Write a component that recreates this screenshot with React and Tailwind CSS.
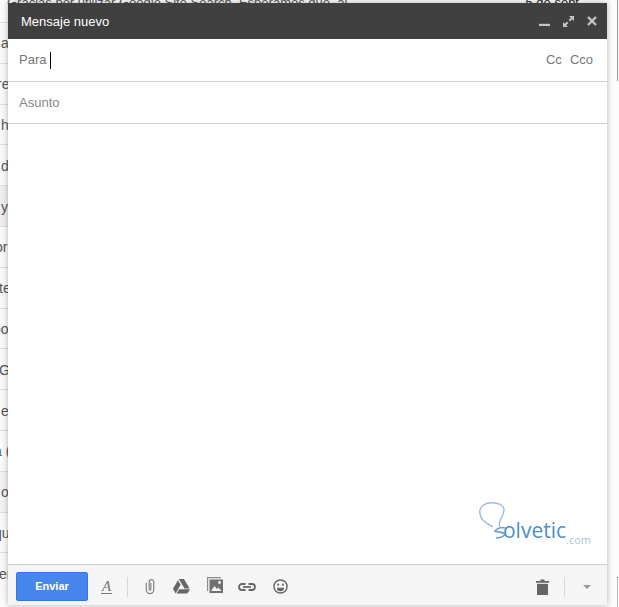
const rows = [
  { text: "a", className: "ml-[1px]", bg: "bg-[#fafafa]" },
  { text: "re", className: "-ml-[3px]", bg: "bg-[#fafafa]" },
  { text: "h", className: "ml-[1px]", bg: "bg-[#fafafa]" },
  { text: "d", className: "ml-[1px]", bg: "bg-[#fafafa]" },
  { text: "y", className: "ml-[1px]", bg: "bg-[#efefef]" },
  { text: "ori", className: "-ml-[5px]", bg: "bg-[#fafafa]" },
  { text: "te", className: "-ml-[1px]", bg: "bg-[#fafafa]" },
  { text: "oo", className: "-ml-[7px]", bg: "bg-[#fafafa]" },
  { text: "Go", className: "-ml-[1px]", bg: "bg-[#fafafa]" },
  { text: "e", className: "ml-[1px]", bg: "bg-[#fafafa]" },
  { text: "a (", className: "-ml-[6px]", bg: "bg-[#fafafa]" },
  { text: "o", className: "ml-[1px]", bg: "bg-[#f3f3f3]" },
  { text: "qu", className: "-ml-[6px]", bg: "bg-[#fafafa]" },
  { text: "er", className: "-ml-[1px]", bg: "bg-[#fafafa]" },
];

function Clip() {
  return (
    <svg width="10" height="17" viewBox="0 0 12 19" fill="none" stroke="#808080" strokeWidth="1.4">
      <path d="M1.5 5v8.5a4.5 4.5 0 0 0 9 0V4a2.75 2.75 0 0 0-5.5 0v9a1 1 0 0 0 2 0V5" />
    </svg>
  );
}

function Drive() {
  return (
    <svg width="17" height="15" viewBox="0 0 17 15" fill="#666">
      <path d="M5.8 0h5.2l5.6 9.6h-5.1z" />
      <path d="M5 1.2 7.6 5.7 2.6 14.4 0 9.8z" />
      <path d="M3.6 14.6 6.2 10.2H17l-2.6 4.4z" />
    </svg>
  );
}

function Photo() {
  return (
    <svg width="16" height="16" viewBox="0 0 16 16">
      <path fill="#8c8c8c" d="M0 0h14v1.2H1.2V14H0z" />
      <path fill="#707070" d="M2.5 2.5H16V16H2.5z" />
      <circle cx="12.5" cy="5.5" r="1.4" fill="#f5f5f5" />
      <path fill="#f5f5f5" d="M4 14l3.5-5 2.5 3 1.5-1.5 3 3.5z" />
    </svg>
  );
}

function LinkIcon() {
  return (
    <svg width="18" height="8" viewBox="0 0 18 8" fill="none" stroke="#666" strokeWidth="1.8">
      <path d="M7.5 1H4a3 3 0 0 0 0 6h3.5" />
      <path d="M10.5 1H14a3 3 0 0 1 0 6h-3.5" />
      <path d="M5 4h8" />
    </svg>
  );
}

function Smile() {
  return (
    <svg width="15" height="15" viewBox="0 0 16 16" fill="none" stroke="#666" strokeWidth="1.5">
      <circle cx="8" cy="8" r="7" />
      <circle cx="5.5" cy="6" r="1.1" fill="#666" stroke="none" />
      <circle cx="10.5" cy="6" r="1.1" fill="#666" stroke="none" />
      <path d="M4.2 9.3h7.6a3.8 3.8 0 0 1-7.6 0z" fill="#666" stroke="none" />
    </svg>
  );
}

function Trash() {
  return (
    <svg width="13" height="16" viewBox="0 0 13 16" fill="#666">
      <path d="M0 2h4.5V.6h4V2H13v1.8H0z" />
      <path d="M1 4.8h11V16H1z" />
    </svg>
  );
}

function Minimize() {
  return (
    <svg width="11" height="11" viewBox="0 0 11 11" fill="#c4c4c4">
      <path d="M0 7.8h11v2.2H0z" />
    </svg>
  );
}

function Expand() {
  return (
    <svg width="11" height="11" viewBox="0 0 11 11" fill="#c4c4c4">
      <path d="M6 0h5v5L9.2 3.2 7 5.4 5.6 4 7.8 1.8z" />
      <path d="M5 11H0V6l1.8 1.8L4 5.6 5.4 7 3.2 9.2z" />
    </svg>
  );
}

function Close() {
  return (
    <svg width="10" height="10" viewBox="0 0 10 10" stroke="#c4c4c4" strokeWidth="2.4">
      <path d="M1 1l8 8M9 1l-8 8" />
    </svg>
  );
}

function Logo() {
  return (
    <div className="flex items-end font-['Open_Sans',sans-serif] leading-none">
      <svg width="28" height="38" viewBox="0 0 28 38" fill="none" className="-mr-[4px] mb-[4px]">
        <path
          d="M14 25C8 21 1 19 .8 10 .6 4 6 1 12 .8 19 .5 25 3 25 8c0 5-3 7-4 11-.5 2-.7 4-.7 6"
          stroke="#9dbde0"
          strokeWidth="1.4"
        />
        <path d="M26 26c-3-1-7 0-10 3 2 1 8 1 10 3 0 2-5 4-9 4" stroke="#6d9fd3" strokeWidth="1.6" />
      </svg>
      <span className="text-[21px] text-[#4a8fcf] mb-[3px]">olvetic</span>
      <span className="text-[11px] text-[#a9c6e4] -mb-[1px]">.com</span>
    </div>
  );
}

export default function App() {
  return (
    <div className="relative w-[619px] h-[607px] overflow-hidden bg-[#fcfcfc] font-['Liberation_Sans',sans-serif]">
      {/* inbox behind the compose window */}
      <div className="h-[22px] flex justify-between pl-[7px] pr-[40px] text-[13px] text-[#555] leading-[5px]">
        <span>Gracias por utilizar Google Site Search. Esperamos que, al</span>
        <span className="text-[#222]">5 de sept</span>
      </div>
      {rows.map((row) => (
        <div
          key={row.text}
          className={`w-[8px] h-[40.8px] border-t border-[#e0e0e0] pt-[2px] flex items-center overflow-hidden text-[14px] text-[#555] whitespace-nowrap ${row.bg}`}
        >
          <span className={row.className}>{row.text}</span>
        </div>
      ))}

      {/* scrollbar edge */}
      <div className="absolute top-0 right-[1px] w-[1px] h-[81px] bg-[#999]" />
      <div className="absolute top-[577px] right-0 w-[2px] h-[30px] border-l border-t border-[#bbb]" />

      {/* compose window */}
      <div className="absolute left-[8px] top-[3px] w-[599px] h-[602px] flex flex-col bg-white shadow-[0_0_6px_rgba(0,0,0,0.3)]">
        <div className="h-[36px] shrink-0 flex items-center justify-between bg-[#404040] pl-[13px] pr-[10px]">
          <span className="text-[13px] text-white mt-[1px]">Mensaje nuevo</span>
          <div className="flex items-center gap-[13px]">
            <Minimize />
            <Expand />
            <Close />
          </div>
        </div>

        <div className="h-[43px] shrink-0 flex items-center justify-between border-b border-[#cfcfcf] pl-[11px] pr-[14px] text-[13px]">
          <div className="flex items-center text-[#777]">
            <span>Para</span>
            <span className="ml-[4px] w-[1px] h-[17px] bg-black" />
          </div>
          <div className="flex gap-[8px] text-[#777]">
            <span>Cc</span>
            <span>Cco</span>
          </div>
        </div>

        <div className="h-[42px] shrink-0 flex items-center border-b border-[#cfcfcf] pl-[11px] text-[13px] text-[#888]">
          Asunto
        </div>

        <div className="relative flex-1">
          <div className="absolute right-[16px] bottom-[20px]">
            <Logo />
          </div>
        </div>

        <div className="h-[41px] shrink-0 flex items-center border-t border-[#cfcfcf] bg-[#f5f5f5] pt-[3px] pl-[8px] pr-[16px]">
          <button className="w-[72px] h-[29px] rounded-[2px] bg-[#4787ed] border border-[#3079ed] text-[11px] font-bold text-white">
            Enviar
          </button>
          <span className="ml-[13px] w-[11px] border-b border-[#777] font-['Liberation_Serif',serif] italic text-[15px] leading-[14px] text-[#777] text-center">
            A
          </span>
          <span className="ml-[15px] w-[1px] h-[20px] bg-[#d8d8d8]" />
          <div className="ml-[17px] flex items-center">
            <Clip />
            <span className="ml-[18px] flex"><Drive /></span>
            <span className="ml-[17px] -mt-[3px] flex"><Photo /></span>
            <span className="ml-[15px] flex"><LinkIcon /></span>
            <span className="ml-[17px] flex"><Smile /></span>
          </div>
          <div className="ml-auto flex items-center">
            <Trash />
            <span className="ml-[15px] w-[1px] h-[20px] bg-[#d8d8d8]" />
            <span className="ml-[18px] w-0 h-0 border-x-[4px] border-x-transparent border-t-[4px] border-t-[#999]" />
          </div>
        </div>
      </div>
    </div>
  );
}
